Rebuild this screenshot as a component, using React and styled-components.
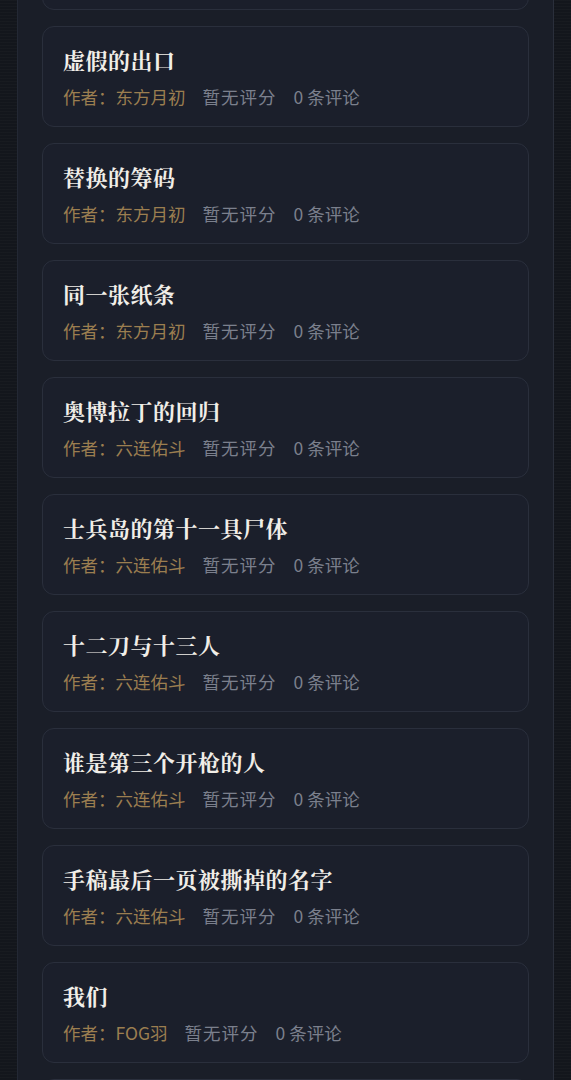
import React from 'react';
import styled, { createGlobalStyle } from 'styled-components';

const GlobalStyle = createGlobalStyle`
  html, body {
    margin: 0;
    padding: 0;
  }
  body {
    background-color: #13161c;
    background-image: repeating-linear-gradient(
      to bottom,
      rgba(255, 255, 255, 0.018) 0,
      rgba(255, 255, 255, 0.018) 1px,
      transparent 1px,
      transparent 3px
    );
    font-family: "Noto Sans CJK SC", "Noto Sans", sans-serif;
    overflow: hidden;
  }
`;

const stories = [
  { title: '看不见的来客', author: '东方月初' },
  { title: '虚假的出口', author: '东方月初' },
  { title: '替换的筹码', author: '东方月初' },
  { title: '同一张纸条', author: '东方月初' },
  { title: '奥博拉丁的回归', author: '六连佑斗' },
  { title: '士兵岛的第十一具尸体', author: '六连佑斗' },
  { title: '十二刀与十三人', author: '六连佑斗' },
  { title: '谁是第三个开枪的人', author: '六连佑斗' },
  { title: '手稿最后一页被撕掉的名字', author: '六连佑斗' },
  { title: '我们', author: 'FOG羽' },
  { title: '雪夜', author: 'FOG羽' },
];

const App = () => {
  return (
    <>
      <GlobalStyle />
      <Page>
        <Panel>
          <List>
            {stories.map((s) => (
              <Card key={s.title}>
                <Title>{s.title}</Title>
                <Meta>
                  <Author>作者：{s.author}</Author>
                  <Stat $spaced>暂无评分</Stat>
                  <Stat>0 条评论</Stat>
                </Meta>
              </Card>
            ))}
          </List>
        </Panel>
      </Page>
    </>
  );
};

const Page = styled.div`
  width: 571px;
  height: 1080px;
  overflow: hidden;
`;

const Panel = styled.main`
  margin: 0 17px;
  min-height: 1080px;
  background: #1a1e28;
  border-left: 1px solid #232834;
  border-right: 1px solid #2a2f3b;
  padding: 0 24px;
  box-sizing: border-box;
`;

const List = styled.div`
  display: flex;
  flex-direction: column;
  gap: 16px;
  margin-top: -91px;
`;

const Card = styled.article`
  background: #1b1f2b;
  border: 1px solid #2a2f3c;
  border-radius: 12px;
  padding: 18px 20px 15px;
`;

const Title = styled.h3`
  margin: 0 0 8px;
  font-family: "Noto Serif CJK SC", "Noto Sans CJK SC", serif;
  font-size: 22px;
  font-weight: 700;
  line-height: 30px;
  color: #f1eee8;
  letter-spacing: 0.5px;
`;

const Meta = styled.div`
  display: flex;
  align-items: center;
  gap: 17px;
  font-size: 17.5px;
  line-height: 28px;
`;

const Author = styled.span`
  color: #9b7e50;
`;

const Stat = styled.span`
  color: #7b808d;
  letter-spacing: ${(p) => (p.$spaced ? '1px' : '0')};
`;

export default App;
